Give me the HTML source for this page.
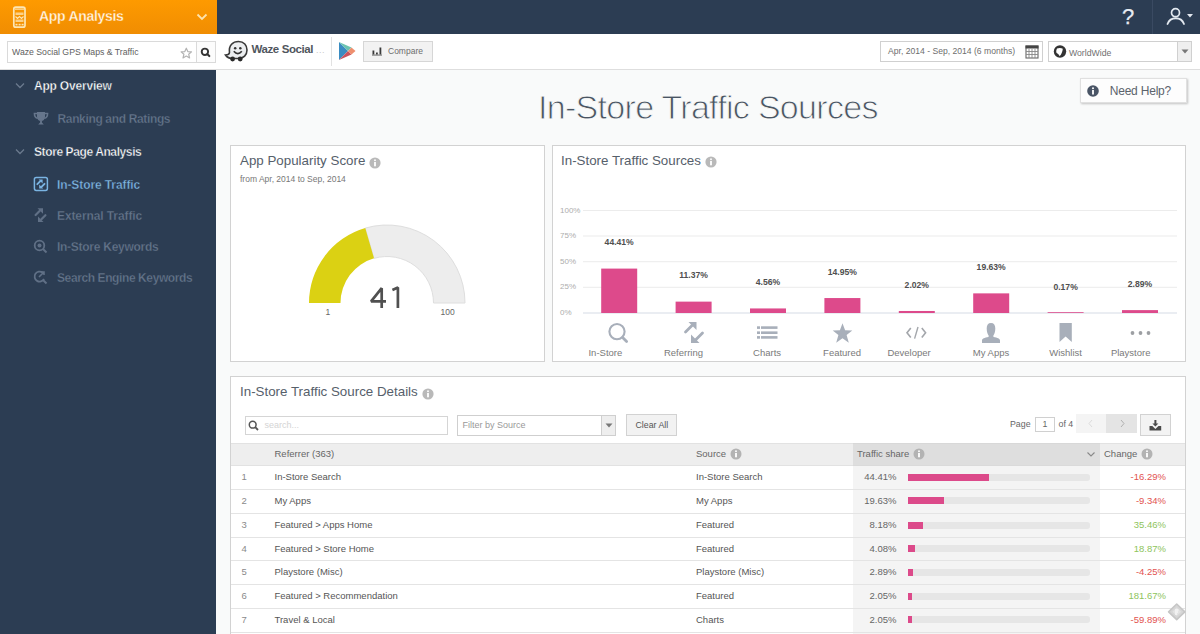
<!DOCTYPE html>
<html><head><meta charset="utf-8">
<style>
*{margin:0;padding:0;box-sizing:border-box}
html,body{width:1200px;height:634px;overflow:hidden;background:#f9fafa;font-family:"Liberation Sans",sans-serif}
.a{position:absolute}
.t{position:absolute;white-space:nowrap;line-height:20px;height:20px}
#top{position:absolute;left:0;top:0;width:1200px;height:34px;background:#2c3d53}
#brand{position:absolute;left:0;top:0;width:217px;height:34px;background:linear-gradient(#fe9a00,#f08d02)}
#bar2{position:absolute;left:0;top:34px;width:1200px;height:36px;background:#fff;border-bottom:1px solid #dedede}
#side{position:absolute;left:0;top:70px;width:216px;height:564px;background:#2c3d53}
.panel{position:absolute;background:#fff;border:1px solid #d2d2d2}
.side-h{font-weight:bold;font-size:12px;color:#fff;-webkit-text-stroke:0.35px #2c3d53}
.side-i{font-weight:bold;font-size:12px;color:#66768c;-webkit-text-stroke:0.3px #2c3d53;letter-spacing:-0.3px}
.ptitle{font-size:13.35px;color:#56606b}
.tb{font-size:9.5px;color:#555}
.row{position:absolute;left:231px;width:954px;height:24px;border-bottom:1px solid #e6e6e6}
</style></head><body>
<div id="top"></div>
<div id="brand"></div>
<div id="bar2"></div>
<div id="side"></div>

<!-- ===== header ===== -->
<svg class="a" style="left:12px;top:5px" width="16" height="24" viewBox="0 0 16 24">
  <rect x="1.8" y="2.2" width="11.2" height="20" rx="2" fill="none" stroke="#fde6b4" stroke-width="1.7"/>
  <rect x="3" y="3.5" width="9" height="1.2" fill="#fde6b4"/>
  <path d="M3.5 7.5 H11.5 V10 H3.5 Z" fill="#fde6b4" opacity="0.75"/>
  <path d="M3.5 11.5 L5.5 13.5 L7.5 11.5 L9.5 13.5 L11.5 11.5" fill="none" stroke="#fde6b4" stroke-width="1.1"/>
  <path d="M3.5 14.5 H11.5 V17 H3.5 Z" fill="#fde6b4" opacity="0.75"/>
  <rect x="3.5" y="18.8" width="2" height="1.6" fill="#fde6b4"/><rect x="6.6" y="18.8" width="2" height="1.6" fill="#fde6b4"/><rect x="9.6" y="18.8" width="2" height="1.6" fill="#fde6b4"/>
</svg>
<div class="t" style="left:39px;top:6px;font-weight:bold;font-size:14px;color:#fff7e6;letter-spacing:-0.3px;-webkit-text-stroke:0.3px #f89400">App Analysis</div>
<svg class="a" style="left:196px;top:13px" width="12" height="8" viewBox="0 0 12 8"><path d="M1.5 1.5 L6 6 L10.5 1.5" fill="none" stroke="#fde3ad" stroke-width="1.8"/></svg>

<div class="t" style="left:1122px;top:6px;font-size:22px;color:#e6ebf1;line-height:22px;height:22px;-webkit-text-stroke:0.25px #e6ebf1">?</div>
<div class="a" style="left:1152px;top:0;width:1px;height:34px;background:#3a4a62"></div>
<svg class="a" style="left:1165px;top:7px" width="30" height="19" viewBox="0 0 30 19">
  <circle cx="10.5" cy="5.7" r="4" fill="none" stroke="#e2e8ef" stroke-width="1.7"/>
  <path d="M2.5 17 A8.8 8.8 0 0 1 19 17" fill="none" stroke="#e2e8ef" stroke-width="1.8" stroke-linecap="round"/>
  <path d="M22 7 L28 7 L25 10.5 Z" fill="#e2e8ef"/>
</svg>

<!-- bar2 -->
<div class="a" style="left:7px;top:41px;width:209px;height:22px;border:1px solid #dadada;background:#fff"></div>
<div class="a" style="left:196px;top:41px;width:20px;height:22px;border:1px solid #dadada;background:#fcfcfc"></div>
<div class="t" style="left:12px;top:42px;font-size:8.7px;color:#606060">Waze Social GPS Maps &amp; Traffic</div>
<svg class="a" style="left:180px;top:47px" width="13" height="12" viewBox="0 0 13 12"><path d="M6.3 1.2 L7.8 4.6 L11.5 4.9 L8.7 7.3 L9.6 10.9 L6.3 9 L3 10.9 L3.9 7.3 L1.1 4.9 L4.8 4.6 Z" fill="none" stroke="#b3b3b3" stroke-width="1.2" stroke-linejoin="round"/></svg>
<svg class="a" style="left:200px;top:47px" width="11" height="11" viewBox="0 0 11 11"><circle cx="4.9" cy="4.8" r="3.2" fill="none" stroke="#333" stroke-width="1.9"/><path d="M7.2 7.1 L9.3 9.1" stroke="#333" stroke-width="2.1" stroke-linecap="round"/></svg>

<svg class="a" style="left:224px;top:40px" width="25" height="22" viewBox="0 0 25 22">
  <path d="M5.5 12.5 C4.5 5 9 1.5 14.5 1.5 C20 1.5 23 5.5 23 10 C23 15 19.5 18.5 14.5 18.5 L9 18.5 C5.5 18.5 3 17.5 1.5 15 C3.5 15 5.3 14.5 5.5 12.5 Z" fill="#eceef0" stroke="#3a3a3a" stroke-width="1.6"/>
  <circle cx="11.2" cy="8.2" r="1.25" fill="#333"/><circle cx="16.3" cy="8.2" r="1.25" fill="#333"/>
  <path d="M9.8 11.3 Q13.8 15.8 17.8 11.3" fill="none" stroke="#333" stroke-width="1.7"/>
  <circle cx="8.6" cy="19" r="2.4" fill="#2a2a2a"/><circle cx="16.2" cy="19" r="2.4" fill="#2a2a2a"/>
</svg>
<div class="t" style="left:251.5px;top:39px;font-weight:bold;font-size:11.5px;color:#50565d;letter-spacing:-0.4px">Waze Social</div>
<div class="t" style="left:316px;top:40px;font-size:9px;color:#c8c8c8;letter-spacing:0.5px">...</div>
<div class="a" style="left:331px;top:37px;width:1px;height:29px;background:#e2e2e2"></div>
<svg class="a" style="left:338px;top:41px" width="19" height="20" viewBox="0 0 19 20">
  <path d="M1 1 L1 19 L10 10 Z" fill="#3a8cc2"/>
  <path d="M1 1 L10 10 L13.5 6.5 Z" fill="#6cc4b0"/>
  <path d="M1 19 L10 10 L13.5 13.5 Z" fill="#c9525e"/>
  <path d="M10 10 L13.5 6.5 L17.5 10 L13.5 13.5 Z" fill="#ee8f6e"/>
</svg>
<div class="a" style="left:363px;top:41px;width:70px;height:21px;border:1px solid #d6d6d6;background:#f2f2f2"></div>
<svg class="a" style="left:371px;top:46px" width="12" height="10" viewBox="0 0 12 10"><rect x="1.5" y="4.5" width="1.8" height="4" fill="#3a3a3a"/><rect x="5" y="6.5" width="1.8" height="2" fill="#3a3a3a"/><rect x="8.5" y="1.5" width="1.8" height="7" fill="#3a3a3a"/><rect x="1" y="8.6" width="10" height="0.9" fill="#555"/></svg>
<div class="t" style="left:388px;top:40.6px;font-size:8.5px;color:#6d6d6d">Compare</div>

<div class="a" style="left:880px;top:41px;width:163px;height:21px;border:1px solid #d0d0d0;background:#fff"></div>
<div class="t" style="left:888px;top:41.3px;font-size:8.6px;color:#6e6e6e">Apr, 2014 - Sep, 2014 (6 months)</div>
<svg class="a" style="left:1024px;top:44px" width="15" height="15" viewBox="0 0 15 15">
  <rect x="2" y="2" width="12" height="12" fill="none" stroke="#666" stroke-width="1.1"/>
  <rect x="1.5" y="1.5" width="13" height="3" fill="#444"/>
  <g stroke="#888" stroke-width="0.9"><path d="M2 7.5 H14 M2 10.5 H14 M5 5 V14 M8 5 V14 M11 5 V14"/></g>
</svg>
<div class="a" style="left:1048px;top:41px;width:144px;height:21px;border:1px solid #d0d0d0;background:#fff"></div>
<div class="a" style="left:1177px;top:41px;width:15px;height:21px;border:1px solid #d0d0d0;background:#efefef"></div>
<svg class="a" style="left:1181px;top:49px" width="8" height="5" viewBox="0 0 8 5"><path d="M0.5 0.5 L7.5 0.5 L4 4.5 Z" fill="#777"/></svg>
<svg class="a" style="left:1053px;top:45px" width="14" height="14" viewBox="0 0 14 14"><circle cx="7" cy="6.5" r="6.2" fill="#333"/><path d="M4 3.5 C6 2.5 8.5 2.8 9.8 3.8 C9.6 6.5 8.5 9.5 6.6 11.2 C6 9.5 4.8 8.5 3.6 8 C3 6.5 3.2 5 4 3.5 Z" fill="#fff"/></svg>
<div class="t" style="left:1069px;top:42.5px;font-size:8.7px;color:#707070">WorldWide</div>

<!-- ===== sidebar ===== -->
<svg class="a" style="left:15px;top:82px" width="10" height="7" viewBox="0 0 10 7"><path d="M1 1.5 L5 5.5 L9 1.5" fill="none" stroke="#6b7a8e" stroke-width="1.3"/></svg>
<div class="t side-h" style="left:34px;top:75.8px;letter-spacing:-0.2px">App Overview</div>
<svg class="a" style="left:33px;top:111px" width="16" height="15" viewBox="0 0 16 15"><path d="M4 1 L12 1 L12 5.5 C12 8.5 10.2 10 8 10 C5.8 10 4 8.5 4 5.5 Z" fill="#66768c"/><path d="M4.2 2.4 L1.4 2.4 C1.4 5 2.6 6.8 4.8 7.3 M11.8 2.4 L14.6 2.4 C14.6 5 13.4 6.8 11.2 7.3" fill="none" stroke="#66768c" stroke-width="1.5"/><path d="M7.1 9.8 L8.9 9.8 L8.9 11.6 L10.8 13.6 L5.2 13.6 L7.1 11.6 Z" fill="#66768c"/></svg>
<div class="t side-i" style="left:57.5px;top:108.5px;letter-spacing:-0.35px">Ranking and Ratings</div>
<svg class="a" style="left:15px;top:148px" width="10" height="7" viewBox="0 0 10 7"><path d="M1 1.5 L5 5.5 L9 1.5" fill="none" stroke="#6b7a8e" stroke-width="1.3"/></svg>
<div class="t side-h" style="left:34px;top:141.7px;letter-spacing:-0.4px">Store Page Analysis</div>
<svg class="a" style="left:33px;top:176px" width="16" height="16" viewBox="0 0 16 16"><rect x="1.4" y="1.4" width="13" height="13" rx="1.8" fill="none" stroke="#7ab4e2" stroke-width="1.5"/><path d="M4.3 8.2 L7.3 5.2" stroke="#7ab4e2" stroke-width="1.9" stroke-linecap="round"/><path d="M5.6 3.6 L9.6 3.6 L9.6 7.6 Z" fill="#7ab4e2"/><path d="M11.5 7.8 L8.5 10.8" stroke="#7ab4e2" stroke-width="1.9" stroke-linecap="round"/><path d="M10.2 12.4 L6.2 12.4 L6.2 8.4 Z" fill="#7ab4e2"/></svg>
<div class="t side-h" style="left:57px;top:175px;color:#80b9e6;letter-spacing:-0.1px">In-Store Traffic</div>
<svg class="a" style="left:33px;top:207px" width="15" height="16" viewBox="0 0 15 16"><path d="M2.6 8 L6.6 4" stroke="#607086" stroke-width="2.2" stroke-linecap="round"/><path d="M4.5 1.2 L10 1.2 L10 6.7 Z" fill="#607086"/><path d="M12.4 8.2 L8.4 12.2" stroke="#607086" stroke-width="2.2" stroke-linecap="round"/><path d="M10.5 15 L5 15 L5 9.5 Z" fill="#607086"/></svg>
<div class="t side-i" style="left:57px;top:205.7px;letter-spacing:-0.1px">External Traffic</div>
<svg class="a" style="left:33px;top:239px" width="15" height="15" viewBox="0 0 15 15"><circle cx="6.5" cy="6.5" r="4.8" fill="none" stroke="#607086" stroke-width="1.8"/><circle cx="6.5" cy="6.5" r="2" fill="#607086"/><path d="M10 10 L13.5 13.5" stroke="#607086" stroke-width="2"/></svg>
<div class="t side-i" style="left:57px;top:236.8px;letter-spacing:-0.27px">In-Store Keywords</div>
<svg class="a" style="left:33px;top:270px" width="15" height="15" viewBox="0 0 15 15"><path d="M9.5 2.5 A5 5 0 1 0 11 9" fill="none" stroke="#607086" stroke-width="1.8"/><path d="M6 7 L11 2 M8 2 L11 2 L11 5" fill="none" stroke="#607086" stroke-width="1.6"/><path d="M10 10 L13.5 13.5" stroke="#607086" stroke-width="2"/></svg>
<div class="t side-i" style="left:57px;top:267.6px;letter-spacing:-0.4px">Search Engine Keywords</div>

<!-- ===== main ===== -->
<div class="t" style="left:538px;top:90.7px;font-size:34px;color:#4a5562;line-height:32px;height:32px;letter-spacing:-0.7px;-webkit-text-stroke:0.9px #f9fafa">In-Store Traffic Sources</div>

<div class="a" style="left:1080px;top:78px;width:107px;height:25px;background:#fdfdfd;border:1px solid #e0e0e0;box-shadow:1px 1px 2px rgba(0,0,0,0.22)"></div>
<svg class="a" style="left:1087px;top:85px" width="12" height="12" viewBox="0 0 12 12"><circle cx="6" cy="6" r="5.8" fill="#4a5566"/><rect x="5.1" y="5" width="1.8" height="4.5" fill="#fff"/><circle cx="6" cy="3.2" r="1" fill="#fff"/></svg>
<div class="t" style="left:1109.7px;top:80.9px;font-size:12px;color:#5b636c;letter-spacing:-0.2px">Need Help?</div>

<!-- panels -->
<div class="panel" style="left:230px;top:145px;width:315px;height:217px"></div>
<div class="panel" style="left:552px;top:145px;width:634px;height:217px"></div>
<div class="panel" style="left:230px;top:376px;width:956px;height:270px"></div>
<!--GEN-->
<div class="t ptitle" style="left:240px;top:151.3px">App Popularity Score</div>
<svg class="a" style="left:369px;top:157px" width="12" height="12" viewBox="0 0 12 12"><circle cx="6" cy="6" r="5.6" fill="#b9b9b9"/><rect x="5.1" y="5" width="1.8" height="4.3" fill="#fff"/><circle cx="6" cy="3.3" r="0.95" fill="#fff"/></svg>
<div class="t" style="left:240px;top:169.3px;font-size:8.5px;color:#777">from Apr, 2014 to Sep, 2014</div>
<svg class="a" style="left:230px;top:145px" width="314" height="216" viewBox="0 0 314 216"><path d="M135.24,83.10 A78,78 0 0 1 235,158 L203.5,158 A46.5,46.5 0 0 0 144.03,113.35 Z" fill="#ededed" stroke="#dedede" stroke-width="1"/><path d="M79,158 A78,78 0 0 1 135.24,83.10 L144.03,113.35 A46.5,46.5 0 0 0 110.5,158 Z" fill="#dbd113"/></svg>
<svg class="a" style="left:360px;top:280px" width="50" height="35" viewBox="360 280 50 35"><path d="M381.7 308 L381.7 288.2 L371.1 301.4 L386 301.4" fill="none" stroke="#505050" stroke-width="2.7" stroke-linejoin="bevel"/><path d="M397.9 308 L397.9 287.6 L392.4 290" fill="none" stroke="#505050" stroke-width="2.7" stroke-linejoin="bevel"/></svg>
<div class="t" style="left:325.5px;top:301.7px;font-size:8.5px;color:#666">1</div>
<div class="t" style="left:440.5px;top:301.7px;font-size:8.5px;color:#666">100</div>
<div class="t ptitle" style="left:561px;top:151.4px">In-Store Traffic Sources</div>
<svg class="a" style="left:705px;top:156px" width="12" height="12" viewBox="0 0 12 12"><circle cx="6" cy="6" r="5.6" fill="#b9b9b9"/><rect x="5.1" y="5" width="1.8" height="4.3" fill="#fff"/><circle cx="6" cy="3.3" r="0.95" fill="#fff"/></svg>
<svg class="a" style="left:0;top:0" width="1200" height="634" viewBox="0 0 1200 634"><rect x="583" y="210.0" width="594" height="1" fill="#ececec"/><rect x="583" y="235.5" width="594" height="1" fill="#ececec"/><rect x="583" y="261.2" width="594" height="1" fill="#ececec"/><rect x="583" y="286.8" width="594" height="1" fill="#ececec"/><rect x="583" y="312.5" width="594" height="1" fill="#d5dbe6"/><rect x="601.2" y="268.59" width="36" height="44.41" fill="#dd4a8b"/><rect x="675.6" y="301.63" width="36" height="11.37" fill="#dd4a8b"/><rect x="750.0" y="308.44" width="36" height="4.56" fill="#dd4a8b"/><rect x="824.4" y="298.05" width="36" height="14.95" fill="#dd4a8b"/><rect x="898.8" y="310.98" width="36" height="2.02" fill="#dd4a8b"/><rect x="973.2" y="293.37" width="36" height="19.63" fill="#dd4a8b"/><rect x="1047.6" y="312.20" width="36" height="0.80" fill="#dd4a8b"/><rect x="1122.0" y="310.11" width="36" height="2.89" fill="#dd4a8b"/></svg>
<div class="t" style="left:560px;top:200.5px;font-size:8px;color:#adadad">100%</div>
<div class="t" style="left:560px;top:226.0px;font-size:8px;color:#adadad">75%</div>
<div class="t" style="left:560px;top:251.7px;font-size:8px;color:#adadad">50%</div>
<div class="t" style="left:560px;top:277.3px;font-size:8px;color:#adadad">25%</div>
<div class="t" style="left:560px;top:303.0px;font-size:8px;color:#adadad">0%</div>
<div class="t" style="left:579.2px;width:80px;text-align:center;top:232.4px;font-size:8.6px;font-weight:bold;color:#4f4f4f">44.41%</div>
<div class="t" style="left:653.6px;width:80px;text-align:center;top:265.4px;font-size:8.6px;font-weight:bold;color:#4f4f4f">11.37%</div>
<div class="t" style="left:728.0px;width:80px;text-align:center;top:272.2px;font-size:8.6px;font-weight:bold;color:#4f4f4f">4.56%</div>
<div class="t" style="left:802.4px;width:80px;text-align:center;top:261.9px;font-size:8.6px;font-weight:bold;color:#4f4f4f">14.95%</div>
<div class="t" style="left:876.8px;width:80px;text-align:center;top:274.8px;font-size:8.6px;font-weight:bold;color:#4f4f4f">2.02%</div>
<div class="t" style="left:951.2px;width:80px;text-align:center;top:257.2px;font-size:8.6px;font-weight:bold;color:#4f4f4f">19.63%</div>
<div class="t" style="left:1025.6px;width:80px;text-align:center;top:276.6px;font-size:8.6px;font-weight:bold;color:#4f4f4f">0.17%</div>
<div class="t" style="left:1100.0px;width:80px;text-align:center;top:273.9px;font-size:8.6px;font-weight:bold;color:#4f4f4f">2.89%</div>
<div class="t" style="left:565.4px;width:80px;text-align:center;top:342.5px;font-size:9.5px;color:#7a7a7a">In-Store</div>
<div class="t" style="left:643.5px;width:80px;text-align:center;top:342.5px;font-size:9.5px;color:#7a7a7a">Referring</div>
<div class="t" style="left:727.1px;width:80px;text-align:center;top:342.5px;font-size:9.5px;color:#7a7a7a">Charts</div>
<div class="t" style="left:802.1px;width:80px;text-align:center;top:342.5px;font-size:9.5px;color:#7a7a7a">Featured</div>
<div class="t" style="left:869.1px;width:80px;text-align:center;top:342.5px;font-size:9.5px;color:#7a7a7a">Developer</div>
<div class="t" style="left:951.0px;width:80px;text-align:center;top:342.5px;font-size:9.5px;color:#7a7a7a">My Apps</div>
<div class="t" style="left:1025.6px;width:80px;text-align:center;top:342.5px;font-size:9.5px;color:#7a7a7a">Wishlist</div>
<div class="t" style="left:1090.7px;width:80px;text-align:center;top:342.5px;font-size:9.5px;color:#7a7a7a">Playstore</div>
<svg class="a" style="left:607px;top:322px" width="22" height="22" viewBox="0 0 22 22"><circle cx="10" cy="9.6" r="7.6" fill="none" stroke="#a8afba" stroke-width="2.1"/><path d="M15.6 15.4 L19.6 19.4" stroke="#a8afba" stroke-width="2.8" stroke-linecap="round"/></svg>
<svg class="a" style="left:683px;top:321px" width="22" height="23" viewBox="0 0 22 23"><path d="M2.5 11 L9.5 4" stroke="#a8afba" stroke-width="2.8" stroke-linecap="round"/><path d="M5.5 1 L13.5 1 L13.5 9 Z" fill="#a8afba"/><path d="M19.5 12 L12.5 19" stroke="#a8afba" stroke-width="2.8" stroke-linecap="round"/><path d="M16.5 22 L8 22 L8 13.5 Z" fill="#a8afba"/></svg>
<svg class="a" style="left:756px;top:325px" width="23" height="15" viewBox="0 0 23 15"><rect x="1" y="1.3" width="3" height="2.6" fill="#a8afba"/><rect x="5" y="1.3" width="16.5" height="2.6" fill="#a8afba"/><rect x="1" y="6.4" width="3" height="2.6" fill="#a8afba"/><rect x="5" y="6.4" width="16.5" height="2.6" fill="#a8afba"/><rect x="1" y="11.1" width="3" height="2.6" fill="#a8afba"/><rect x="5" y="11.1" width="16.5" height="2.6" fill="#a8afba"/></svg>
<svg class="a" style="left:832px;top:322px" width="21" height="22" viewBox="0 0 21 22"><path d="M10.5 1.2 L13.1 8.2 L20.3 8.4 L14.6 12.9 L16.8 20.8 L10.5 16.2 L4.2 20.8 L6.4 12.9 L0.7 8.4 L7.9 8.2 Z" fill="#a8afba"/></svg>
<svg class="a" style="left:905px;top:325px" width="23" height="15" viewBox="0 0 23 15"><path d="M5.8 3 L2 7.8 L5.8 12.6" fill="none" stroke="#a3a6ab" stroke-width="1.6"/><path d="M16.8 3 L20.6 7.8 L16.8 12.6" fill="none" stroke="#a3a6ab" stroke-width="1.6"/><path d="M13 2 L9.6 13.6" stroke="#a3a6ab" stroke-width="1.4"/></svg>
<svg class="a" style="left:980px;top:321px" width="22" height="23" viewBox="0 0 22 23"><path d="M11 2 C14 2 15.3 4 15.3 7.5 C15.3 11 14.2 13.5 13.3 14.8 L13.5 16 C17.5 16.8 20 17.5 20 19.5 L20 22 L2 22 L2 19.5 C2 17.5 4.5 16.8 8.5 16 L8.7 14.8 C7.8 13.5 6.7 11 6.7 7.5 C6.7 4 8 2 11 2 Z" fill="#a8afba"/></svg>
<svg class="a" style="left:1059px;top:322px" width="14" height="21" viewBox="0 0 14 21"><path d="M0.5 1 L12.8 1 L12.8 20 L6.6 14.5 L0.5 20 Z" fill="#a8afba"/></svg>
<svg class="a" style="left:1129px;top:330px" width="24" height="6" viewBox="0 0 24 6"><circle cx="3.5" cy="3" r="1.9" fill="#9d9fa3"/><circle cx="11.5" cy="3" r="1.9" fill="#9d9fa3"/><circle cx="19.5" cy="3" r="1.9" fill="#9d9fa3"/></svg>
<div class="t ptitle" style="left:240px;top:382px">In-Store Traffic Source Details</div>
<svg class="a" style="left:422px;top:388px" width="12" height="12" viewBox="0 0 12 12"><circle cx="6" cy="6" r="5.6" fill="#b9b9b9"/><rect x="5.1" y="5" width="1.8" height="4.3" fill="#fff"/><circle cx="6" cy="3.3" r="0.95" fill="#fff"/></svg>
<div class="a" style="left:245px;top:416px;width:203px;height:19px;border:1px solid #d5d5d5;background:#fff"></div>
<svg class="a" style="left:248px;top:420px" width="11" height="11" viewBox="0 0 11 11"><circle cx="4.7" cy="4.7" r="3.4" fill="none" stroke="#555" stroke-width="1.5"/><path d="M7.2 7.2 L10 10" stroke="#555" stroke-width="1.8"/></svg>
<div class="t" style="left:264.5px;top:415px;font-size:9px;color:#d4d4d4">search...</div>
<div class="a" style="left:457px;top:415px;width:159px;height:21px;border:1px solid #cfcfcf;background:#fff"></div>
<div class="a" style="left:601px;top:415px;width:15px;height:21px;border:1px solid #cfcfcf;background:#eeeeee"></div>
<svg class="a" style="left:605px;top:423px" width="8" height="5" viewBox="0 0 8 5"><path d="M0.5 0.5 L7.5 0.5 L4 4.5 Z" fill="#777"/></svg>
<div class="t" style="left:462.5px;top:415.3px;font-size:9px;color:#999">Filter by Source</div>
<div class="a" style="left:626px;top:414px;width:51px;height:22px;border:1px solid #d2d2d2;background:#f2f2f2"></div>
<div class="t" style="left:635.5px;top:414.5px;font-size:8.8px;color:#555">Clear All</div>
<div class="t" style="left:1010px;top:414.2px;font-size:8.8px;color:#666">Page</div>
<div class="a" style="left:1035px;top:417px;width:20px;height:15px;border:1px solid #d0d0d0;background:#fff"></div>
<div class="t" style="left:1035px;width:20px;text-align:center;top:414.4px;font-size:8.8px;color:#666">1</div>
<div class="t" style="left:1058.5px;top:414.2px;font-size:8.8px;color:#666">of 4</div>
<div class="a" style="left:1076px;top:414px;width:30px;height:19px;background:#f4f4f4"></div>
<div class="a" style="left:1106px;top:414px;width:31px;height:19px;background:#e4e4e4"></div>
<svg class="a" style="left:1087px;top:419px" width="8" height="9" viewBox="0 0 8 9"><path d="M5 1 L2 4.5 L5 8" fill="none" stroke="#dcdcdc" stroke-width="1"/></svg>
<svg class="a" style="left:1118px;top:419px" width="8" height="9" viewBox="0 0 8 9"><path d="M3 1 L6 4.5 L3 8" fill="none" stroke="#b0b0b0" stroke-width="1"/></svg>
<div class="a" style="left:1140px;top:414px;width:31px;height:22px;border:1px solid #d2d2d2;background:#f3f3f3"></div>
<svg class="a" style="left:1148px;top:418px" width="15" height="14" viewBox="0 0 15 14"><rect x="6.4" y="2" width="2" height="4.2" fill="#4a4a4a"/><path d="M4.4 5.6 L10.4 5.6 L7.4 8.6 Z" fill="#4a4a4a"/><path d="M1.5 8 L4.3 8 L7.4 11 L10.5 8 L13.2 8 L13.2 12.6 L1.5 12.6 Z" fill="#4a4a4a"/></svg>
<div class="a" style="left:231px;top:443px;width:954px;height:23px;background:#eeeeee;border-top:1px solid #e2e2e2;border-bottom:1px solid #e2e2e2"></div>
<div class="a" style="left:853px;top:443px;width:247px;height:23px;background:#dedede;border-top:1px solid #d8d8d8;border-bottom:1px solid #dadada"></div>
<div class="a" style="left:853px;top:466px;width:247px;height:180px;background:#f4f4f4"></div>
<div class="t tb" style="left:274.5px;top:444.0px;color:#666">Referrer (363)</div>
<div class="t tb" style="left:696px;top:444.0px;color:#666">Source</div>
<div class="t tb" style="left:857px;top:444.0px;color:#666">Traffic share</div>
<div class="t tb" style="left:1104px;top:444.0px;color:#666">Change</div>
<svg class="a" style="left:730px;top:448px" width="12" height="12" viewBox="0 0 12 12"><circle cx="6" cy="6" r="5.5" fill="#b3b3b3"/><rect x="5.1" y="5" width="1.8" height="4.3" fill="#fff"/><circle cx="6" cy="3.3" r="0.95" fill="#fff"/></svg>
<svg class="a" style="left:913px;top:448px" width="12" height="12" viewBox="0 0 12 12"><circle cx="6" cy="6" r="5.5" fill="#b3b3b3"/><rect x="5.1" y="5" width="1.8" height="4.3" fill="#fff"/><circle cx="6" cy="3.3" r="0.95" fill="#fff"/></svg>
<svg class="a" style="left:1141px;top:448px" width="12" height="12" viewBox="0 0 12 12"><circle cx="6" cy="6" r="5.5" fill="#b3b3b3"/><rect x="5.1" y="5" width="1.8" height="4.3" fill="#fff"/><circle cx="6" cy="3.3" r="0.95" fill="#fff"/></svg>
<svg class="a" style="left:1086px;top:451px" width="10" height="7" viewBox="0 0 10 7"><path d="M1.5 1.5 L5 5 L8.5 1.5" fill="none" stroke="#888" stroke-width="1.1"/></svg>
<div class="a" style="left:231px;top:489px;width:954px;height:1px;background:#e4e4e4"></div>
<div class="t tb" style="left:241.5px;top:467.1px;color:#8a8a8a">1</div>
<div class="t tb" style="left:274.5px;top:467.1px">In-Store Search</div>
<div class="t tb" style="left:696px;top:467.1px">In-Store Search</div>
<div class="t tb" style="left:796px;width:100.5px;text-align:right;top:467.1px;color:#666">44.41%</div>
<div class="a" style="left:908px;top:473.8px;width:181.5px;height:7px;border-radius:3px;background:#e6e6e6"></div>
<div class="a" style="left:908px;top:473.8px;width:80.6px;height:7px;border-radius:0;background:#dc4a8a"></div>
<div class="t tb" style="left:1066px;width:100px;text-align:right;top:467.1px;color:#e2534f">-16.29%</div>
<div class="a" style="left:231px;top:513px;width:954px;height:1px;background:#e4e4e4"></div>
<div class="t tb" style="left:241.5px;top:490.8px;color:#8a8a8a">2</div>
<div class="t tb" style="left:274.5px;top:490.8px">My Apps</div>
<div class="t tb" style="left:696px;top:490.8px">My Apps</div>
<div class="t tb" style="left:796px;width:100.5px;text-align:right;top:490.8px;color:#666">19.63%</div>
<div class="a" style="left:908px;top:497.4px;width:181.5px;height:7px;border-radius:3px;background:#e6e6e6"></div>
<div class="a" style="left:908px;top:497.4px;width:35.6px;height:7px;border-radius:0;background:#dc4a8a"></div>
<div class="t tb" style="left:1066px;width:100px;text-align:right;top:490.8px;color:#e2534f">-9.34%</div>
<div class="a" style="left:231px;top:537px;width:954px;height:1px;background:#e4e4e4"></div>
<div class="t tb" style="left:241.5px;top:514.8px;color:#8a8a8a">3</div>
<div class="t tb" style="left:274.5px;top:514.8px">Featured &gt; Apps Home</div>
<div class="t tb" style="left:696px;top:514.8px">Featured</div>
<div class="t tb" style="left:796px;width:100.5px;text-align:right;top:514.8px;color:#666">8.18%</div>
<div class="a" style="left:908px;top:521.5px;width:181.5px;height:7px;border-radius:3px;background:#e6e6e6"></div>
<div class="a" style="left:908px;top:521.5px;width:14.8px;height:7px;border-radius:0;background:#dc4a8a"></div>
<div class="t tb" style="left:1066px;width:100px;text-align:right;top:514.8px;color:#8ec45c">35.46%</div>
<div class="a" style="left:231px;top:560px;width:954px;height:1px;background:#e4e4e4"></div>
<div class="t tb" style="left:241.5px;top:538.5px;color:#8a8a8a">4</div>
<div class="t tb" style="left:274.5px;top:538.5px">Featured &gt; Store Home</div>
<div class="t tb" style="left:696px;top:538.5px">Featured</div>
<div class="t tb" style="left:796px;width:100.5px;text-align:right;top:538.5px;color:#666">4.08%</div>
<div class="a" style="left:908px;top:545.2px;width:181.5px;height:7px;border-radius:3px;background:#e6e6e6"></div>
<div class="a" style="left:908px;top:545.2px;width:7.4px;height:7px;border-radius:0;background:#dc4a8a"></div>
<div class="t tb" style="left:1066px;width:100px;text-align:right;top:538.5px;color:#8ec45c">18.87%</div>
<div class="a" style="left:231px;top:584px;width:954px;height:1px;background:#e4e4e4"></div>
<div class="t tb" style="left:241.5px;top:562.0px;color:#8a8a8a">5</div>
<div class="t tb" style="left:274.5px;top:562.0px">Playstore (Misc)</div>
<div class="t tb" style="left:696px;top:562.0px">Playstore (Misc)</div>
<div class="t tb" style="left:796px;width:100.5px;text-align:right;top:562.0px;color:#666">2.89%</div>
<div class="a" style="left:908px;top:568.8px;width:181.5px;height:7px;border-radius:3px;background:#e6e6e6"></div>
<div class="a" style="left:908px;top:568.8px;width:5.2px;height:7px;border-radius:0;background:#dc4a8a"></div>
<div class="t tb" style="left:1066px;width:100px;text-align:right;top:562.0px;color:#e2534f">-4.25%</div>
<div class="a" style="left:231px;top:608px;width:954px;height:1px;background:#e4e4e4"></div>
<div class="t tb" style="left:241.5px;top:585.8px;color:#8a8a8a">6</div>
<div class="t tb" style="left:274.5px;top:585.8px">Featured &gt; Recommendation</div>
<div class="t tb" style="left:696px;top:585.8px">Featured</div>
<div class="t tb" style="left:796px;width:100.5px;text-align:right;top:585.8px;color:#666">2.05%</div>
<div class="a" style="left:908px;top:592.5px;width:181.5px;height:7px;border-radius:3px;background:#e6e6e6"></div>
<div class="a" style="left:908px;top:592.5px;width:3.8px;height:7px;border-radius:0;background:#dc4a8a"></div>
<div class="t tb" style="left:1066px;width:100px;text-align:right;top:585.8px;color:#8ec45c">181.67%</div>
<div class="a" style="left:231px;top:632px;width:954px;height:1px;background:#e4e4e4"></div>
<div class="t tb" style="left:241.5px;top:609.5px;color:#8a8a8a">7</div>
<div class="t tb" style="left:274.5px;top:609.5px">Travel &amp; Local</div>
<div class="t tb" style="left:696px;top:609.5px">Charts</div>
<div class="t tb" style="left:796px;width:100.5px;text-align:right;top:609.5px;color:#666">2.05%</div>
<div class="a" style="left:908px;top:616.2px;width:181.5px;height:7px;border-radius:3px;background:#e6e6e6"></div>
<div class="a" style="left:908px;top:616.2px;width:3.8px;height:7px;border-radius:0;background:#dc4a8a"></div>
<div class="t tb" style="left:1066px;width:100px;text-align:right;top:609.5px;color:#e2534f">-59.89%</div>
<svg class="a" style="left:1167px;top:602px" width="20" height="20" viewBox="0 0 20 20"><path d="M9.7 2 L17.8 9.8 L9.7 17.6 L1.6 9.8 Z" fill="#d6d6d6" stroke="#c6c6c6" stroke-width="1.6" stroke-linejoin="round"/><path d="M9.7 5.5 L14 9.8 L9.7 14.1 L5.4 9.8 Z" fill="#e3e3e3"/><path d="M8 8 L11.5 8 M8 10 L11 10 M8 12 L10 12" stroke="#fff" stroke-width="1.1"/></svg>
<!--/GEN-->


</body></html>
